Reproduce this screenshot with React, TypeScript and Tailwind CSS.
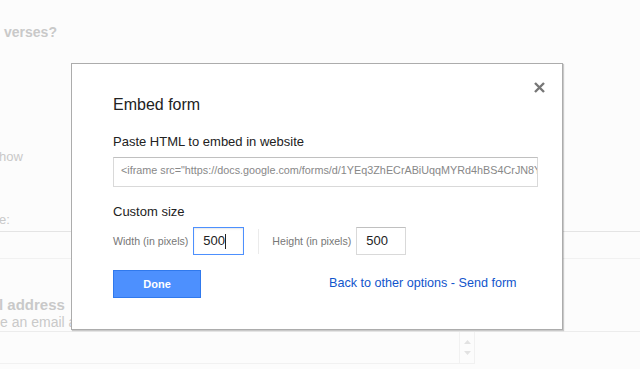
import React from "react";

export default function App() {
  const font = { fontFamily: '"Liberation Sans", Arial, sans-serif' };
  return (
    <div className="relative w-[640px] h-[369px] overflow-hidden bg-[#fcfcfc]" style={font}>
      {/* background page */}
      <div className="flex flex-col text-[#c9c9c9]">
        <div className="h-[24px]" />
        <div className="pl-[4px] text-[14px] font-bold leading-[16px]">verses?</div>
        <div className="h-[109px]" />
        <div className="text-[13px] leading-[16px] -ml-[1px]">how</div>
        <div className="h-[47px]" />
        <div className="text-[13px] leading-[16px] -ml-[1px]">e:</div>
        <div className="h-[3px]" />
        <div className="w-[640px] border-t border-[#e4e4e4] h-[27px]" />
        <div className="w-[640px] border-t border-[#f1f1f1] h-[38px]" />
        <div className="text-[15px] font-bold leading-[17px] -ml-[1px]">l address</div>
        <div className="text-[14px] leading-[17px] -ml-[3px] mt-[1px]">le an email a</div>
        <div className="w-[640px] border-t border-[#ececec]" />
        <div className="flex w-[475px] h-[32px] border-b border-r border-[#f1f1f1]">
          <div className="flex-1" />
          <div className="w-[15px] border-l border-[#f1f1f1] flex flex-col items-center justify-between py-[8px]">
            <svg width="7" height="4" viewBox="0 0 7 4"><path d="M0 4 L3.5 0 L7 4 Z" fill="#e2e2e2" /></svg>
            <svg width="7" height="4" viewBox="0 0 7 4"><path d="M0 0 L3.5 4 L7 0 Z" fill="#e2e2e2" /></svg>
          </div>
        </div>
      </div>

      {/* dialog */}
      <div className="absolute left-[71px] top-[63px] w-[492px] h-[267px] bg-white border border-[#acacac] shadow-[1px_1px_1px_rgba(0,0,0,0.2)] px-[41px] pt-[31px]">
        <button className="absolute right-[16px] top-[16px] w-[14px] h-[14px] flex items-center justify-center">
          <svg width="11" height="11" viewBox="0 0 11 11">
            <path d="M1 1 L10 10 M10 1 L1 10" stroke="#777" strokeWidth="2.4" strokeLinecap="butt" />
          </svg>
        </button>
        <div className="text-[16px] leading-[20px] text-[#222]">Embed form</div>
        <div className="mt-[19px] text-[13px] leading-[16px] text-[#222]">Paste HTML to embed in website</div>
        <div className="mt-[7px] w-[425px] h-[30px] border border-[#d9d9d9] border-t-[#c0c0c0] px-[7px] flex items-center overflow-hidden">
          <span className="text-[10.8px] text-[#888] whitespace-nowrap leading-[14px] -mt-[4px]">
            &lt;iframe src="https://docs.google.com/forms/d/1YEq3ZhECrABiUqqMYRd4hBS4CrJN8YAm0k
          </span>
        </div>
        <div className="mt-[17px] text-[13px] leading-[16px] text-[#222]">Custom size</div>
        <div className="mt-[7px] flex items-center h-[28px]">
          <span className="text-[10.6px] text-[#777] leading-[14px] whitespace-nowrap">Width (in pixels)</span>
          <div className="ml-[5px] w-[51px] h-[28px] border border-[#4d90fe] flex items-center pl-[9px] shadow-[inset_0_1px_2px_rgba(0,0,0,0.1)]">
            <span className="text-[13px] text-[#222] leading-[16px]">500</span>
            <span className="w-px h-[15px] bg-[#222]" />
          </div>
          <div className="ml-[14px] w-px h-[25px] bg-[#ebebeb]" />
          <span className="ml-[13px] text-[10.6px] text-[#777] leading-[14px] whitespace-nowrap">Height (in pixels)</span>
          <div className="ml-[5px] w-[50px] h-[28px] border border-[#d9d9d9] border-t-[#c0c0c0] flex items-center pl-[9px]">
            <span className="text-[13px] text-[#222] leading-[16px]">500</span>
          </div>
        </div>
        <div className="mt-[15px] flex items-center">
          <div className="w-[88px] h-[28px] bg-[#4d90fe] border border-[#3079ed] flex items-center justify-center text-white text-[11px] font-bold">
            Done
          </div>
          <div className="ml-[128px] text-[12.6px] text-[#15c] leading-[16px] -mt-[3px] whitespace-nowrap">
            Back to other options - Send form
          </div>
        </div>
      </div>
    </div>
  );
}
